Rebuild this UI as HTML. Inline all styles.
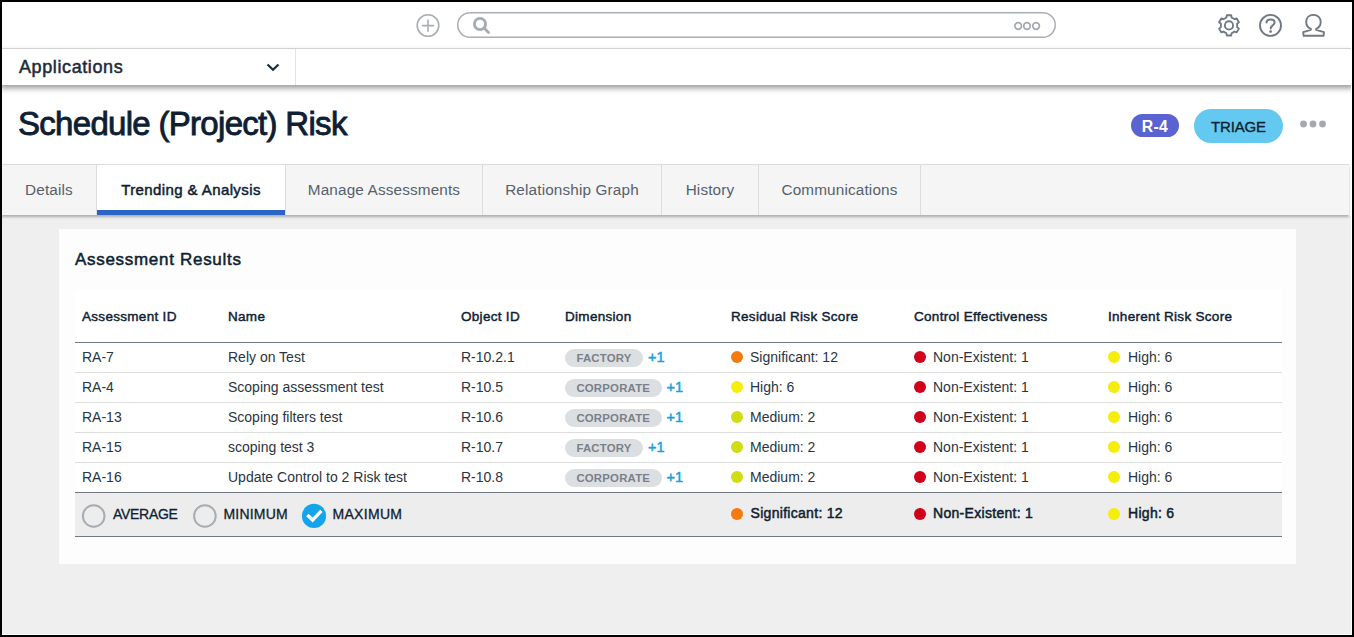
<!DOCTYPE html>
<html><head><meta charset="utf-8">
<style>
*{box-sizing:border-box;margin:0;padding:0}
html,body{width:1354px;height:637px;overflow:hidden;background:#efefef;font-family:"Liberation Sans",sans-serif;color:#1c2a3b}
.abs{position:absolute}
.t{position:absolute;white-space:nowrap}
.sb{-webkit-text-stroke:0.5px currentColor}
#frame{position:absolute;left:0;top:0;width:1354px;height:637px;border:2px solid #000;z-index:50}
#frame2{position:absolute;left:2px;top:2px;width:1350px;height:633px;border-right:1px solid #fff;border-bottom:1px solid #fff;z-index:49}
#topbar{position:absolute;left:0;top:0;width:1354px;height:49px;background:#fff;border-bottom:1px solid #dedfe0}
#navbar{position:absolute;left:0;top:49px;width:1354px;height:36px;background:#fff;box-shadow:0 3px 6px rgba(0,0,0,.42);z-index:2}
#header{position:absolute;left:0;top:85px;width:1354px;height:80px;background:#fff}
#tabs{position:absolute;left:0;top:164px;width:1349px;height:51px;background:#f5f5f5;border-top:1px solid #dcdcdc;box-shadow:0 1.5px 2.5px rgba(0,0,0,.28)}
.tab{position:absolute;top:0;height:50px;border-right:1px solid #dcdcdc;font-size:15.3px;color:#56616b;line-height:49px;letter-spacing:0.15px;text-align:center}
.tab.active{background:#fff;color:#0f1e33;font-size:15px;letter-spacing:0.4px;-webkit-text-stroke:0.5px #0f1e33}
.tab.active:after{content:"";position:absolute;left:0;right:0;bottom:0;height:5px;background:#2a64c6}
#card{position:absolute;left:59px;top:229px;width:1237px;height:335px;background:#fdfdfd}
#tbl{position:absolute;left:75px;top:290px;width:1207px;height:247px;background:#fff}
.th{position:absolute;top:309px;font-size:13.5px;letter-spacing:0.3px;color:#0f1e33;white-space:nowrap;-webkit-text-stroke:0.45px #0f1e33;line-height:16px}
.row{position:absolute;left:0;width:1354px;height:30px}
.rl{position:absolute;left:75px;width:1207px;height:1px;background:#dddddd}
.cell{position:absolute;top:-1px;font-size:14px;line-height:30px;color:#2a3442;white-space:nowrap}
.pill{position:absolute;top:6px;height:18px;border-radius:9px;background:#dcdfe2;color:#7a8088;font-size:11.4px;font-weight:bold;line-height:18px;text-align:center;letter-spacing:0.2px}
.plus{position:absolute;top:-1px;font-size:14.5px;color:#17a1e6;line-height:30px;-webkit-text-stroke:0.5px #17a1e6}
.dot{position:absolute;top:8px;width:12px;height:12px;border-radius:6px}
.flab{position:absolute;top:506px;font-size:14px;color:#0f1e33;line-height:16px;-webkit-text-stroke:0.3px #0f1e33;white-space:nowrap}
.fval{position:absolute;top:505px;font-size:14px;color:#0f1e33;line-height:16px;letter-spacing:0.3px;-webkit-text-stroke:0.5px #0f1e33;white-space:nowrap}
</style></head><body>
<div id="frame"></div><div id="frame2"></div>
<div id="topbar">
  <svg class="abs" style="left:415px;top:12px" width="26" height="26" viewBox="0 0 26 26">
    <circle cx="13" cy="13.5" r="10.8" fill="none" stroke="#a9aeb3" stroke-width="1.6"/>
    <path d="M13 7.5V19.8M6.8 13.6H19.2" stroke="#a9aeb3" stroke-width="1.6"/>
  </svg>
  <svg class="abs" style="left:450px;top:5px" width="615" height="40" viewBox="450 5 615 40"><rect x="457.75" y="12.75" width="597.5" height="24.5" rx="12.25" fill="none" stroke="#a9aeb3" stroke-width="1.5"/></svg>
  <svg class="abs" style="left:471px;top:15px" width="22" height="22" viewBox="0 0 22 22">
    <circle cx="9" cy="9" r="5.6" fill="none" stroke="#a5abb0" stroke-width="2.8"/>
    <path d="M13 13L17.5 17.5" stroke="#a5abb0" stroke-width="2.8" stroke-linecap="round"/>
  </svg>
  <svg class="abs" style="left:1012px;top:20px" width="34" height="16" viewBox="0 0 34 16">
    <circle cx="6.2" cy="6" r="3.3" fill="none" stroke="#a5abb0" stroke-width="1.7"/>
    <circle cx="15" cy="6" r="3.3" fill="none" stroke="#a5abb0" stroke-width="1.7"/>
    <circle cx="24.1" cy="6" r="3.3" fill="none" stroke="#a5abb0" stroke-width="1.7"/>
  </svg>
  <svg class="abs" style="left:1200px;top:0" width="150" height="48" viewBox="1200 0 150 48">
    <g fill="none" stroke="#6f7a84" stroke-width="1.9" stroke-linejoin="round">
      <path d="M1226.84 15.23 L1231.16 15.23 L1231.56 17.51 L1234.55 19.23 L1236.73 18.44 L1238.89 22.19 L1237.12 23.67 L1237.12 27.13 L1238.89 28.61 L1236.73 32.36 L1234.55 31.57 L1231.56 33.29 L1231.16 35.57 L1226.84 35.57 L1226.44 33.29 L1223.45 31.57 L1221.27 32.36 L1219.11 28.61 L1220.88 27.13 L1220.88 23.67 L1219.11 22.19 L1221.27 18.44 L1223.45 19.23 L1226.44 17.51Z"/>
      <circle cx="1229" cy="25.4" r="4.1"/>
      <circle cx="1270.5" cy="25.4" r="10.5"/>
      <path d="M1266.6 22.6C1266.6 20.5 1268.2 19.4 1270.6 19.4C1273 19.4 1274.6 20.8 1274.6 22.6C1274.6 25 1270.7 25.5 1270.7 28.6" stroke-linecap="round" stroke-width="2"/>
      <path d="M1313.4 14.9C1309 14.9 1306.2 18 1306.2 22C1306.2 25.3 1308 27.6 1310.9 28.9L1310.9 29.8L1303.2 32.2L1303.6 35.7L1323.6 35.7L1324 32.2L1316.1 29.8L1316.1 28.9C1319 27.6 1320.7 25.3 1320.7 22C1320.7 18 1317.9 14.9 1313.4 14.9Z"/>
    </g>
    <circle cx="1270.6" cy="31.6" r="1.4" fill="#6f7a84"/>
  </svg>
</div>
<div id="navbar">
  <div class="t" style="left:19px;top:8px;font-size:18px;letter-spacing:0.6px;color:#1c2a3b;line-height:20px;-webkit-text-stroke:0.5px #1c2a3b">Applications</div>
  <svg class="abs" style="left:265px;top:11px" width="16" height="14" viewBox="0 0 16 14">
    <path d="M2.5 4.5L8 9.8L13.5 4.5" fill="none" stroke="#1c2a3b" stroke-width="2.2"/>
  </svg>
  <div class="abs" style="left:295px;top:0;width:1px;height:36px;background:#e3e3e3"></div>
</div>
<div id="header">
  <div class="t" style="left:18px;top:20px;font-size:33px;letter-spacing:-0.7px;color:#0f1e33;line-height:38px;-webkit-text-stroke:0.9px #0f1e33">Schedule (Project) Risk</div>
  <div class="abs" style="left:1131px;top:29px;width:48px;height:23px;border-radius:12px;background:#5b62d2;color:#fff;font-weight:bold;font-size:15.8px;letter-spacing:0.3px;line-height:25px;text-align:center">R-4</div>
  <div class="abs" style="left:1194px;top:24px;width:89px;height:34px;border-radius:17px;background:#64c9f0;color:#0f1e33;font-size:15px;letter-spacing:-0.15px;line-height:35px;text-align:center;-webkit-text-stroke:0.35px #0f1e33">TRIAGE</div>
  <svg class="abs" style="left:1297px;top:32px" width="32" height="14" viewBox="0 0 32 14">
    <circle cx="6.5" cy="7" r="3.4" fill="#a4a9ae"/><circle cx="16" cy="7" r="3.4" fill="#a4a9ae"/><circle cx="25.5" cy="7" r="3.4" fill="#a4a9ae"/>
  </svg>
</div>
<div class="abs" style="left:1349px;top:164px;width:5px;height:52px;background:#fff"></div>
<div id="tabs">
  <div class="tab" style="left:2px;width:95px">Details</div>
  <div class="tab active" style="left:97px;width:189px">Trending &amp; Analysis</div>
  <div class="tab" style="left:286px;width:197px">Manage Assessments</div>
  <div class="tab" style="left:483px;width:179px">Relationship Graph</div>
  <div class="tab" style="left:662px;width:97px">History</div>
  <div class="tab" style="left:759px;width:162px">Communications</div>
</div>
<div id="card"></div>
<div id="tbl"></div>
<div class="t" style="left:75px;top:250px;font-size:17px;letter-spacing:0.7px;color:#0f1e33;line-height:20px;-webkit-text-stroke:0.5px #0f1e33">Assessment Results</div>
<div class="th" style="left:82px">Assessment ID</div>
<div class="th" style="left:228px">Name</div>
<div class="th" style="left:461px">Object ID</div>
<div class="th" style="left:565px">Dimension</div>
<div class="th" style="left:731px">Residual Risk Score</div>
<div class="th" style="left:914px">Control Effectiveness</div>
<div class="th" style="left:1108px">Inherent Risk Score</div>
<div class="abs" style="left:75px;top:342px;width:1207px;height:1px;background:#6f7880"></div>

<div class="row" style="top:343px">
  <div class="cell" style="left:82px">RA-7</div>
  <div class="cell" style="left:228px">Rely on Test</div>
  <div class="cell" style="left:461px">R-10.2.1</div>
  <div class="pill" style="left:565px;width:78px">FACTORY</div>
  <div class="plus" style="left:648px">+1</div>
  <div class="dot" style="left:731px;background:#f47a0f"></div>
  <div class="cell" style="left:750px">Significant: 12</div>
  <div class="dot" style="left:914px;background:#d0021b"></div>
  <div class="cell" style="left:933px">Non-Existent: 1</div>
  <div class="dot" style="left:1108px;background:#f5ee0a"></div>
  <div class="cell" style="left:1128px">High: 6</div>
</div>
<div class="rl" style="top:372px"></div>
<div class="row" style="top:373px">
  <div class="cell" style="left:82px">RA-4</div>
  <div class="cell" style="left:228px">Scoping assessment test</div>
  <div class="cell" style="left:461px">R-10.5</div>
  <div class="pill" style="left:565px;width:96.5px">CORPORATE</div>
  <div class="plus" style="left:666.5px">+1</div>
  <div class="dot" style="left:731px;background:#f5ee0a"></div>
  <div class="cell" style="left:750px">High: 6</div>
  <div class="dot" style="left:914px;background:#d0021b"></div>
  <div class="cell" style="left:933px">Non-Existent: 1</div>
  <div class="dot" style="left:1108px;background:#f5ee0a"></div>
  <div class="cell" style="left:1128px">High: 6</div>
</div>
<div class="rl" style="top:402px"></div>
<div class="row" style="top:403px">
  <div class="cell" style="left:82px">RA-13</div>
  <div class="cell" style="left:228px">Scoping filters test</div>
  <div class="cell" style="left:461px">R-10.6</div>
  <div class="pill" style="left:565px;width:96.5px">CORPORATE</div>
  <div class="plus" style="left:666.5px">+1</div>
  <div class="dot" style="left:731px;background:#cfdd12"></div>
  <div class="cell" style="left:750px">Medium: 2</div>
  <div class="dot" style="left:914px;background:#d0021b"></div>
  <div class="cell" style="left:933px">Non-Existent: 1</div>
  <div class="dot" style="left:1108px;background:#f5ee0a"></div>
  <div class="cell" style="left:1128px">High: 6</div>
</div>
<div class="rl" style="top:432px"></div>
<div class="row" style="top:433px">
  <div class="cell" style="left:82px">RA-15</div>
  <div class="cell" style="left:228px">scoping test 3</div>
  <div class="cell" style="left:461px">R-10.7</div>
  <div class="pill" style="left:565px;width:78px">FACTORY</div>
  <div class="plus" style="left:648px">+1</div>
  <div class="dot" style="left:731px;background:#cfdd12"></div>
  <div class="cell" style="left:750px">Medium: 2</div>
  <div class="dot" style="left:914px;background:#d0021b"></div>
  <div class="cell" style="left:933px">Non-Existent: 1</div>
  <div class="dot" style="left:1108px;background:#f5ee0a"></div>
  <div class="cell" style="left:1128px">High: 6</div>
</div>
<div class="rl" style="top:462px"></div>
<div class="row" style="top:463px">
  <div class="cell" style="left:82px">RA-16</div>
  <div class="cell" style="left:228px">Update Control to 2 Risk test</div>
  <div class="cell" style="left:461px">R-10.8</div>
  <div class="pill" style="left:565px;width:96.5px">CORPORATE</div>
  <div class="plus" style="left:666.5px">+1</div>
  <div class="dot" style="left:731px;background:#cfdd12"></div>
  <div class="cell" style="left:750px">Medium: 2</div>
  <div class="dot" style="left:914px;background:#d0021b"></div>
  <div class="cell" style="left:933px">Non-Existent: 1</div>
  <div class="dot" style="left:1108px;background:#f5ee0a"></div>
  <div class="cell" style="left:1128px">High: 6</div>
</div>
<div class="abs" style="left:75px;top:492px;width:1207px;height:45px;background:#ededed;border-top:1px solid #6f7880;border-bottom:1px solid #6f7880"></div>
<svg class="abs" style="left:81px;top:503px" width="26" height="26" viewBox="0 0 26 26"><circle cx="12.7" cy="13" r="10.8" fill="none" stroke="#a7adb2" stroke-width="2"/></svg>
<div class="flab" style="left:113px;letter-spacing:-0.3px">AVERAGE</div>
<svg class="abs" style="left:192px;top:503px" width="26" height="26" viewBox="0 0 26 26"><circle cx="12.9" cy="13" r="10.8" fill="none" stroke="#a7adb2" stroke-width="2"/></svg>
<div class="flab" style="left:223.5px;letter-spacing:0.2px">MINIMUM</div>
<svg class="abs" style="left:301px;top:503px" width="26" height="26" viewBox="0 0 26 26"><circle cx="13" cy="12.9" r="12.1" fill="#13a4ea"/><path d="M6.4 12L11.6 17L20.4 7.9" fill="none" stroke="#fff" stroke-width="3.4" stroke-linecap="butt" stroke-linejoin="miter"/></svg>
<div class="flab" style="left:332.5px;letter-spacing:0.3px">MAXIMUM</div>
<div class="dot" style="left:731px;top:507.5px;background:#f47a0f"></div>
<div class="fval" style="left:750.5px">Significant: 12</div>
<div class="dot" style="left:914px;top:507.5px;background:#d0021b"></div>
<div class="fval" style="left:933px">Non-Existent: 1</div>
<div class="dot" style="left:1108px;top:507.5px;background:#f5ee0a"></div>
<div class="fval" style="left:1128px">High: 6</div>
</body></html>
